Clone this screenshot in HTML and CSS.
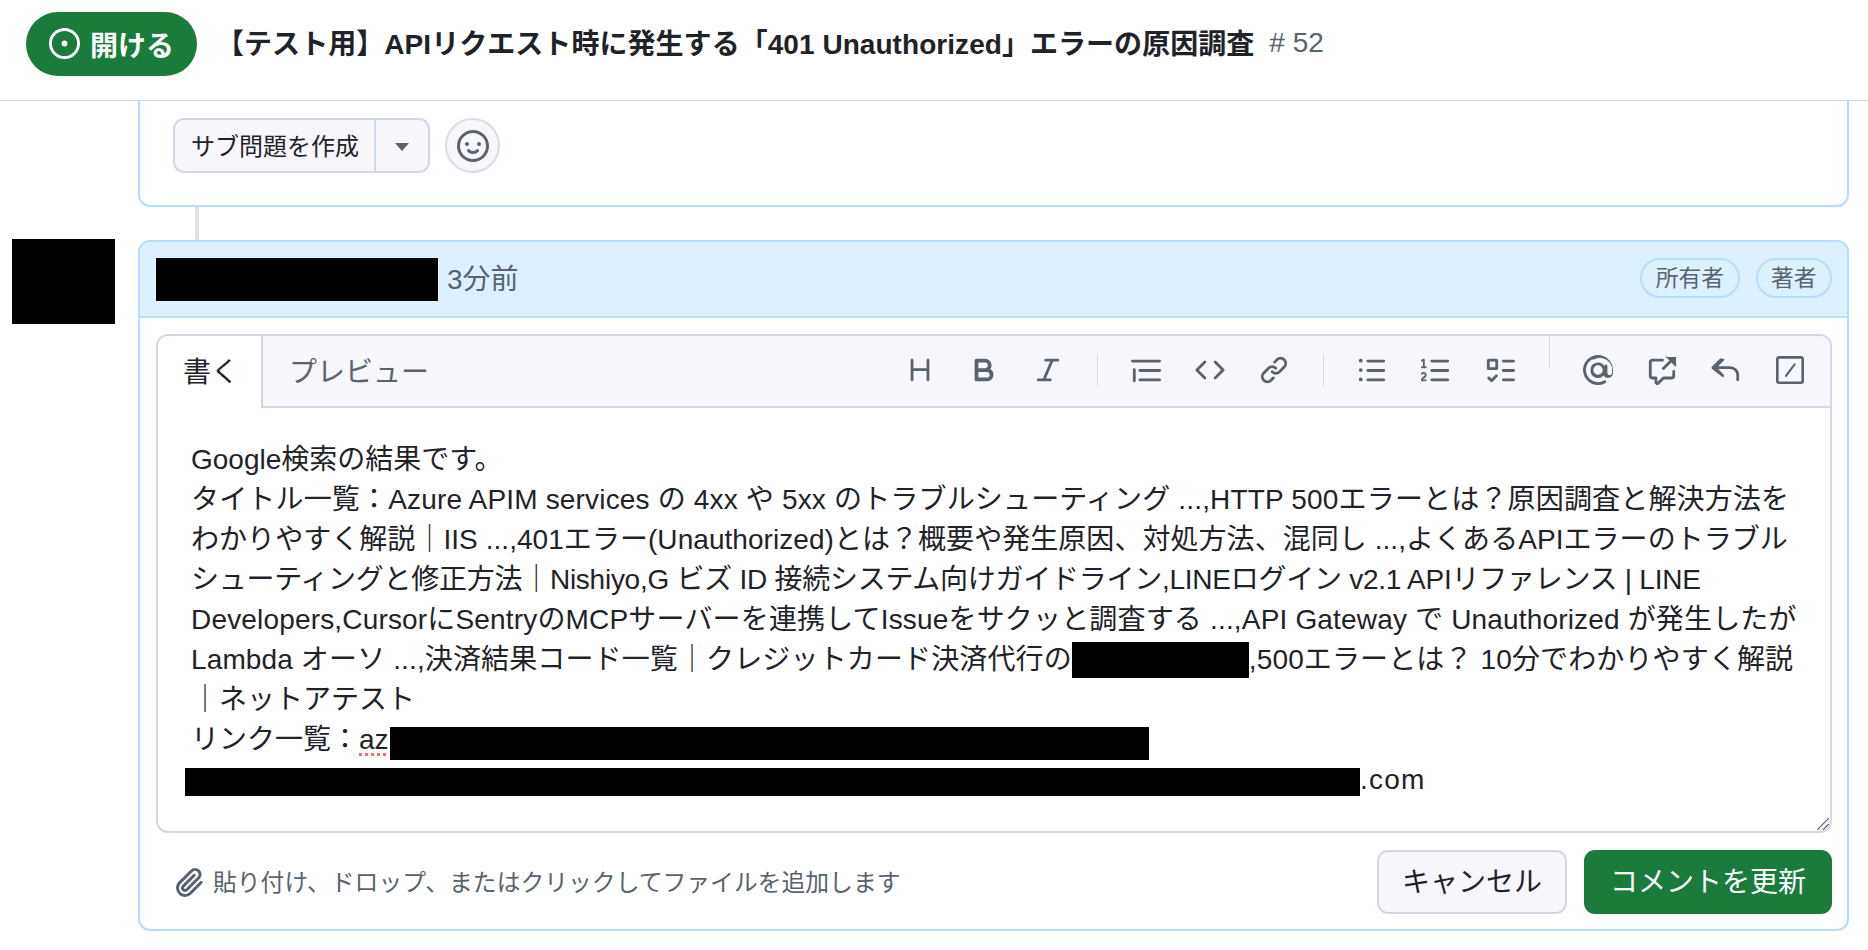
FILE: index.html
```html
<!DOCTYPE html>
<html lang="ja">
<head>
<meta charset="utf-8">
<title>Issue</title>
<link rel="stylesheet" href="styles.css">
</head>
<body>
<header class="topbar">
  <span class="state">
    <svg class="ic state-ic" viewBox="0 0 16 16"><path d="M8 9.5a1.5 1.5 0 1 0 0-3 1.5 1.5 0 0 0 0 3Z"/><path d="M8 0a8 8 0 1 1 0 16A8 8 0 0 1 8 0ZM1.5 8a6.5 6.5 0 1 0 13 0 6.5 6.5 0 0 0-13 0Z"/></svg>
    開ける
  </span>
  <span class="issue-title">【テスト用】APIリクエスト時に発生する「401 Unauthorized」エラーの原因調査</span>
  <span class="issue-num"># 52</span>
</header>

<main class="timeline">
  <section class="prev-box">
    <div class="split-btn">
      <span class="split-main">サブ問題を作成</span>
      <span class="split-caret"><i class="caret"></i></span>
    </div>
    <span class="emoji-btn">
      <svg class="ic" viewBox="0 0 16 16"><path d="M8 0a8 8 0 1 1 0 16A8 8 0 0 1 8 0ZM1.5 8a6.5 6.5 0 1 0 13 0 6.5 6.5 0 0 0-13 0Zm3.82 1.636a.75.75 0 0 1 1.038.175l.007.009c.103.118.22.222.35.31.264.178.683.37 1.285.37.602 0 1.02-.192 1.285-.371.13-.088.247-.192.35-.31l.007-.008a.75.75 0 0 1 1.222.87l-.022-.015c.02.013.021.015.021.015v.001l-.001.002-.002.003-.005.007-.014.019a2.066 2.066 0 0 1-.184.213c-.16.166-.338.316-.53.445-.63.418-1.37.638-2.127.629-.946 0-1.652-.308-2.126-.63a3.331 3.331 0 0 1-.715-.657l-.014-.02-.005-.006-.002-.003v-.002h-.001l.613-.432-.614.43a.75.75 0 0 1 .183-1.044ZM12 7a1 1 0 1 1-2 0 1 1 0 0 1 2 0ZM5 8a1 1 0 1 1 0-2 1 1 0 0 1 0 2Z"/></svg>
    </span>
  </section>
  <div class="connector"></div>

  <section class="comment-row">
    <div class="avatar"></div>
    <div class="comment">
      <div class="comment-head">
        <span class="redact-name"></span>
        <span class="time">3分前</span>
        <span class="badges">
          <span class="badge">所有者</span>
          <span class="badge">著者</span>
        </span>
      </div>
      <div class="comment-body">
        <div class="editor">
          <div class="editor-bar">
            <span class="tab active">書く</span>
            <span class="tab">プレビュー</span>
            <div class="tools">
              <svg class="ic" viewBox="0 0 16 16"><path d="M3.75 2a.75.75 0 0 1 .75.75V7h7V2.75a.75.75 0 0 1 1.5 0v10.5a.75.75 0 0 1-1.5 0V8.5h-7v4.75a.75.75 0 0 1-1.5 0V2.75A.75.75 0 0 1 3.75 2Z"/></svg>
              <svg class="ic" viewBox="0 0 16 16"><path d="M4 2h4.5a3.501 3.501 0 0 1 2.852 5.53A3.499 3.499 0 0 1 9.5 14H4a1 1 0 0 1-1-1V3a1 1 0 0 1 1-1Zm1 7v3h4.5a1.5 1.5 0 0 0 0-3Zm3.5-2a1.5 1.5 0 0 0 0-3H5v3Z"/></svg>
              <svg class="ic" viewBox="0 0 16 16"><path d="M6 2.75A.75.75 0 0 1 6.75 2h6.5a.75.75 0 0 1 0 1.5h-2.505l-3.858 9H9.25a.75.75 0 0 1 0 1.5h-6.5a.75.75 0 0 1 0-1.5h2.505l3.858-9H6.75A.75.75 0 0 1 6 2.75Z"/></svg>
              <i class="sep"></i>
              <svg class="ic" viewBox="0 0 16 16"><path d="M.75 2.5h14.5a.75.75 0 0 1 0 1.5H.75a.75.75 0 0 1 0-1.5Zm4 5h10.5a.75.75 0 0 1 0 1.5H4.75a.75.75 0 0 1 0-1.5Zm0 5h10.5a.75.75 0 0 1 0 1.5H4.75a.75.75 0 0 1 0-1.5ZM2.5 7.75v6a.75.75 0 0 1-1.5 0v-6a.75.75 0 0 1 1.5 0Z"/></svg>
              <svg class="ic" viewBox="0 0 16 16"><path d="m11.28 3.22 4.25 4.25a.75.75 0 0 1 0 1.06l-4.25 4.25a.749.749 0 0 1-1.275-.326.749.749 0 0 1 .215-.734L13.94 8l-3.72-3.72a.749.749 0 0 1 .326-1.275.749.749 0 0 1 .734.215Zm-6.56 0a.751.751 0 0 1 1.042.018.751.751 0 0 1 .018 1.042L2.06 8l3.72 3.72a.749.749 0 0 1-.326 1.275.749.749 0 0 1-.734-.215L.47 8.53a.75.75 0 0 1 0-1.06Z"/></svg>
              <svg class="ic" viewBox="0 0 16 16"><path d="m7.775 3.275 1.25-1.25a3.5 3.5 0 1 1 4.95 4.95l-2.5 2.5a3.5 3.5 0 0 1-4.95 0 .751.751 0 0 1 .018-1.042.751.751 0 0 1 1.042-.018 1.998 1.998 0 0 0 2.83 0l2.5-2.5a2.002 2.002 0 0 0-2.83-2.83l-1.25 1.25a.751.751 0 0 1-1.042-.018.751.751 0 0 1-.018-1.042Zm-4.69 9.64a1.998 1.998 0 0 0 2.83 0l1.25-1.25a.751.751 0 0 1 1.042.018.751.751 0 0 1 .018 1.042l-1.25 1.25a3.5 3.5 0 1 1-4.95-4.95l2.5-2.5a3.5 3.5 0 0 1 4.95 0 .751.751 0 0 1-.018 1.042.751.751 0 0 1-1.042.018 1.998 1.998 0 0 0-2.83 0l-2.5 2.5a1.998 1.998 0 0 0 0 2.83Z"/></svg>
              <i class="sep"></i>
              <svg class="ic" viewBox="0 0 16 16"><path d="M5.75 2.5h8.5a.75.75 0 0 1 0 1.5h-8.5a.75.75 0 0 1 0-1.5Zm0 5h8.5a.75.75 0 0 1 0 1.5h-8.5a.75.75 0 0 1 0-1.5Zm0 5h8.5a.75.75 0 0 1 0 1.5h-8.5a.75.75 0 0 1 0-1.5ZM2 14a1 1 0 1 1 0-2 1 1 0 0 1 0 2Zm1-6a1 1 0 1 1-2 0 1 1 0 0 1 2 0ZM2 4a1 1 0 1 1 0-2 1 1 0 0 1 0 2Z"/></svg>
              <svg class="ic" viewBox="0 0 16 16"><path d="M5 3.25a.75.75 0 0 1 .75-.75h8.5a.75.75 0 0 1 0 1.5h-8.5A.75.75 0 0 1 5 3.25Zm0 5a.75.75 0 0 1 .75-.75h8.5a.75.75 0 0 1 0 1.5h-8.5A.75.75 0 0 1 5 8.25Zm0 5a.75.75 0 0 1 .75-.75h8.5a.75.75 0 0 1 0 1.5h-8.5a.75.75 0 0 1-.75-.75ZM.924 10.32a.5.5 0 0 1-.851-.525l.001-.001.001-.002.002-.004.007-.011c.097-.144.215-.273.348-.384.228-.19.588-.392 1.068-.392.468 0 .858.181 1.126.484.259.294.377.673.377 1.038 0 .987-.686 1.495-1.156 1.845l-.047.035c-.303.225-.522.4-.654.597h1.357a.5.5 0 0 1 0 1H.5a.5.5 0 0 1-.5-.5c0-1.005.692-1.52 1.167-1.875l.035-.025c.531-.396.8-.625.8-1.078a.57.57 0 0 0-.128-.376C1.806 10.068 1.695 10 1.5 10a.658.658 0 0 0-.429.163.835.835 0 0 0-.144.153ZM2.003 2.5V6h.503a.5.5 0 0 1 0 1H.5a.5.5 0 0 1 0-1h.503V3.308l-.28.14a.5.5 0 0 1-.446-.895l1.003-.5a.5.5 0 0 1 .723.447Z"/></svg>
              <svg class="ic" viewBox="0 0 16 16"><path d="M2 2h4a1 1 0 0 1 1 1v4a1 1 0 0 1-1 1H2a1 1 0 0 1-1-1V3a1 1 0 0 1 1-1Zm4.655 8.595a.75.75 0 0 1 0 1.06L4.03 14.28a.75.75 0 0 1-1.06 0l-1.5-1.5a.749.749 0 0 1 .326-1.275.749.749 0 0 1 .734.215l.97.97 2.095-2.095a.75.75 0 0 1 1.06 0ZM9.75 2.5h5.5a.75.75 0 0 1 0 1.5h-5.5a.75.75 0 0 1 0-1.5Zm0 5h5.5a.75.75 0 0 1 0 1.5h-5.5a.75.75 0 0 1 0-1.5Zm0 5h5.5a.75.75 0 0 1 0 1.5h-5.5a.75.75 0 0 1 0-1.5Zm-7.25-9v3h3v-3Z"/></svg>
              <i class="sep high"></i>
              <svg class="ic" viewBox="0 0 16 16"><path d="M4.75 2.37a6.501 6.501 0 0 0 6.5 11.26.75.75 0 0 1 .75 1.298A7.999 7.999 0 0 1 .989 4.148 8 8 0 0 1 16 8v1.5a2.75 2.75 0 0 1-5.072 1.475A3.999 3.999 0 0 1 4 8a4 4 0 0 1 7.5-1.937V5.75a.75.75 0 0 1 1.5 0V9.5a1.25 1.25 0 0 0 2.5 0V8a6.5 6.5 0 0 0-9.75-5.63ZM10.5 8a2.5 2.5 0 1 0-5 0 2.5 2.5 0 0 0 5 0Z"/></svg>
              <svg class="ic" viewBox="0 0 16 16"><path d="M2.75 3.5a.25.25 0 0 0-.25.25v7.5c0 .138.112.25.25.25h2a.75.75 0 0 1 .75.75v2.19l2.72-2.72a.749.749 0 0 1 .53-.22h4.5a.25.25 0 0 0 .25-.25v-2.5a.75.75 0 0 1 1.5 0v2.5A1.75 1.75 0 0 1 13.25 13H9.06l-2.573 2.573A1.458 1.458 0 0 1 4 14.543V13H2.75A1.75 1.75 0 0 1 1 11.25v-7.5C1 2.784 1.784 2 2.75 2h5.5a.75.75 0 0 1 0 1.5ZM10.5 1h4.75a.25.25 0 0 1 .25.25V6a.25.25 0 0 1-.427.177L13.03 4.03 9.28 7.78a.751.751 0 0 1-1.042-.018.751.751 0 0 1-.018-1.042l3.75-3.75-2.147-2.146A.25.25 0 0 1 10.5 1Z"/></svg>
              <svg class="ic" viewBox="0 0 16 16"><path d="M6.78 1.97a.75.75 0 0 1 0 1.06L3.81 6h6.44A4.75 4.75 0 0 1 15 10.75v2.5a.75.75 0 0 1-1.5 0v-2.5a3.25 3.25 0 0 0-3.25-3.25H3.81l2.97 2.97a.749.749 0 0 1-.326 1.275.749.749 0 0 1-.734-.215L.47 7.28a.751.751 0 0 1 0-1.06l4.25-4.25a.75.75 0 0 1 1.06 0Z"/></svg>
              <svg class="ic slash" viewBox="0 0 16 16"><path d="M0 1.75C0 .784.784 0 1.75 0h12.5C15.216 0 16 .784 16 1.75v12.5A1.75 1.75 0 0 1 14.25 16H1.75A1.75 1.75 0 0 1 0 14.25Zm1.75-.25a.25.25 0 0 0-.25.25v12.5c0 .138.112.25.25.25h12.5a.25.25 0 0 0 .25-.25V1.75a.25.25 0 0 0-.25-.25ZM10.2 4.4a.6.6 0 0 1 1 .65l-5 6.6a.6.6 0 0 1-1-.7Z"/></svg>
            </div>
          </div>
          <div class="editor-text">
            <div class="ln">Google検索の結果です。</div>
            <div class="ln wide">タイトル一覧：Azure APIM services の 4xx や 5xx のトラブルシューティング ...,HTTP 500エラーとは？原因調査と解決方法を</div>
            <div class="ln slight">わかりやすく解説｜IIS ...,401エラー(Unauthorized)とは？概要や発生原因、対処方法、混同し ...,よくあるAPIエラーのトラブル</div>
            <div class="ln tight">シューティングと修正方法｜Nishiyo,G ビズ ID 接続システム向けガイドライン,LINEログイン v2.1 APIリファレンス | LINE</div>
            <div class="ln wide">Developers,CursorにSentryのMCPサーバーを連携してIssueをサクッと調査する ...,API Gateway で Unauthorized が発生したが</div>
            <div class="ln mid">Lambda オーソ ...,決済結果コード一覧｜クレジットカード決済代行の<span class="redact r-a"></span>,500エラーとは？ 10分でわかりやすく解説</div>
            <div class="ln">｜ネットアテスト</div>
            <div class="ln">リンク一覧：<span class="spell">az</span><span class="redact r-b"></span></div>
            <div class="ln loose"><span class="redact r-c"></span>.com</div>
            <svg class="grip" viewBox="0 0 12 12"><path d="M1 11 11 1M6 11l5-5" /></svg>
          </div>
        </div>
        <div class="actions">
          <svg class="ic clip" viewBox="0 0 16 16"><path d="M12.212 3.02a1.753 1.753 0 0 0-2.478.003l-5.83 5.83a3.007 3.007 0 0 0-.88 2.127c0 .795.315 1.551.88 2.116.567.567 1.333.89 2.126.89.79 0 1.548-.321 2.116-.89l5.48-5.48a.75.75 0 0 1 1.061 1.06l-5.48 5.48a4.492 4.492 0 0 1-3.177 1.33c-1.2 0-2.345-.487-3.187-1.33a4.483 4.483 0 0 1-1.32-3.177c0-1.195.475-2.341 1.32-3.186l5.83-5.83a3.25 3.25 0 0 1 5.553 2.297c0 .863-.343 1.691-.953 2.301L7.439 12.39c-.375.377-.884.59-1.416.593a1.998 1.998 0 0 1-1.412-.593 1.992 1.992 0 0 1 0-2.828l5.48-5.48a.751.751 0 0 1 1.042.018.751.751 0 0 1 .018 1.042l-5.48 5.48a.492.492 0 0 0 0 .707.499.499 0 0 0 .7 0l5.833-5.83a1.755 1.755 0 0 0 .008-2.479Z"/></svg>
          <span class="hint">貼り付け、ドロップ、またはクリックしてファイルを追加します</span>
          <button class="btn cancel">キャンセル</button>
          <button class="btn primary">コメントを更新</button>
        </div>
      </div>
    </div>
  </section>
</main>
</body>
</html>
```

FILE: styles.css
```css
* { box-sizing: border-box; }
html, body { margin: 0; height: 950px; overflow: hidden; background: #fff; }
body {
  font-family: "Liberation Sans", "Noto Sans CJK JP", sans-serif;
  font-size: 28px;
  color: #1f2328;
}
.ic { width: 28px; height: 28px; fill: currentColor; flex: none; display: block; }

.topbar {
  height: 101px;
  border-bottom: 1px solid #d1d9e6;
  display: flex;
  align-items: center;
  padding: 0 0 13px 26px;
}
.state {
  width: 171px;
  height: 64px;
  border-radius: 32px;
  background: #1a7b3b;
  color: #fff;
  font-weight: 700;
  display: flex;
  align-items: center;
  justify-content: center;
  gap: 10px;
  margin-right: 19px;
}
.state-ic { width: 31px; height: 31px; }
.issue-title { font-weight: 700; white-space: nowrap; letter-spacing: 0.05px; padding-bottom: 4px; }
.issue-num { color: #59636e; margin-left: 15px; padding-bottom: 2px; }

.timeline { padding-left: 138px; padding-right: 19px; }
.prev-box {
  height: 106px;
  border: 2px solid #b6dcff;
  border-top: 0;
  border-radius: 0 0 12px 12px;
  padding: 17px 0 0 33px;
  display: flex;
  align-items: flex-start;
  gap: 15px;
}
.split-btn {
  height: 55px;
  width: 257px;
  border: 2px solid #d1d9e6;
  border-radius: 11px;
  background: #f6f6fb;
  display: flex;
  font-size: 24px;
}
.split-main {
  flex: 1;
  display: flex;
  align-items: center;
  padding: 0 0 2px 16px;
  border-right: 2px solid #d1d9e6;
}
.split-caret { width: 52px; flex: none; display: flex; align-items: center; justify-content: center; }
.caret {
  width: 0; height: 0;
  border-left: 7px solid transparent;
  border-right: 7px solid transparent;
  border-top: 8px solid #59636e;
  margin-top: 3px;
}
.emoji-btn {
  width: 55px;
  height: 55px;
  border: 2px solid #d8dee9;
  border-radius: 50%;
  background: #f6f6fb;
  color: #59636e;
  display: flex;
  align-items: center;
  justify-content: center;
}
.emoji-btn .ic { width: 32px; height: 32px; }
.connector { width: 4px; height: 33px; margin-left: 57px; background: #dfe4ec; }

.comment-row { position: relative; }
.avatar {
  position: absolute;
  left: -126px;
  top: -1px;
  width: 103px;
  height: 85px;
  background: #000;
}
.comment {
  height: 691px;
  border: 2px solid #b6dcff;
  border-radius: 12px;
  display: flex;
  flex-direction: column;
}
.comment-head {
  height: 76px;
  flex: none;
  background: #ddf0ff;
  border-bottom: 2px solid #b6dcff;
  border-radius: 10px 10px 0 0;
  display: flex;
  align-items: center;
  padding: 0 15px 0 16px;
}
.redact-name { width: 282px; height: 43px; background: #000; }
.time { color: #59636e; margin: 0 0 5px 9px; }
.badges { margin-left: auto; display: flex; gap: 16px; margin-bottom: 2px; }
.badge {
  height: 40px;
  padding: 0 13.5px 3px;
  border: 2px solid #b6dcff;
  border-radius: 20px;
  font-size: 22.75px;
  color: #59636e;
  display: flex;
  align-items: center;
}
.comment-body { padding: 16px 15px 0 16px; flex: 1; }
.editor {
  height: 499px;
  border: 2px solid #d1d9e6;
  border-radius: 12px;
  display: flex;
  flex-direction: column;
  overflow: hidden;
}
.editor-bar {
  height: 72px;
  flex: none;
  background: #f6f6fb;
  border-bottom: 2px solid #d1d9e6;
  display: flex;
  align-items: stretch;
}
.tab {
  display: flex;
  align-items: center;
  height: 68px;
  padding: 0 26px;
  color: #59636e;
}
.tab.active {
  width: 105px;
  height: 72px;
  background: #fff;
  color: #1f2328;
  border-right: 2px solid #d1d9e6;
  padding: 0 0 4px 25px;
}
.tools {
  margin-left: auto;
  display: flex;
  align-items: center;
  color: #59636e;
  padding-right: 25px;
  padding-bottom: 2px;
  gap: 34px;
}
.tools .ic { width: 30px; height: 30px; }
.tools .slash { width: 28px; height: 28px; margin: 0 1px; }
.sep { width: 1px; height: 32px; background: #d1d9e6; margin: 0 -0.5px; }
.sep.high { margin-bottom: 36px; }
.editor-text { position: relative; padding: 32px 33px 0; flex: 1; }
.ln { height: 40px; line-height: 40px; white-space: nowrap; }
.wide { letter-spacing: 0.17px; }
.slight { letter-spacing: 0.05px; }
.tight { letter-spacing: -0.26px; }
.mid { letter-spacing: 0.13px; }
.loose { letter-spacing: 1.2px; }
.redact { display: inline-block; background: #000; vertical-align: top; }
.r-a { width: 177px; height: 36px; margin-top: 2px; }
.r-b { width: 759px; height: 33px; margin-top: 7px; margin-left: 1px; }
.r-c { width: 1175px; height: 28px; margin-top: 8px; margin-left: -6px; }
.spell { text-decoration: underline dotted #f56a6a 3px; text-underline-offset: 4px; }
.grip {
  position: absolute;
  right: 0;
  bottom: 0;
  width: 14px;
  height: 14px;
  fill: none;
  stroke: #57606a;
  stroke-width: 1;
}
.actions {
  display: flex;
  align-items: center;
  padding-top: 17px;
}
.clip { color: #59636e; width: 32px; height: 32px; margin-left: 17px; }
.hint { color: #59636e; margin: 0 auto 4px 8px; font-size: 23.8px; }
.btn {
  height: 64px;
  border-radius: 11px;
  font: inherit;
  padding: 0 0 5px;
}
.cancel {
  width: 190px;
  background: #f6f6fb;
  border: 2px solid #d1d9e6;
  color: #1f2328;
}
.primary {
  width: 248px;
  margin-left: 17px;
  background: #1a7b3b;
  border: 0;
  color: #fff;
}
```
